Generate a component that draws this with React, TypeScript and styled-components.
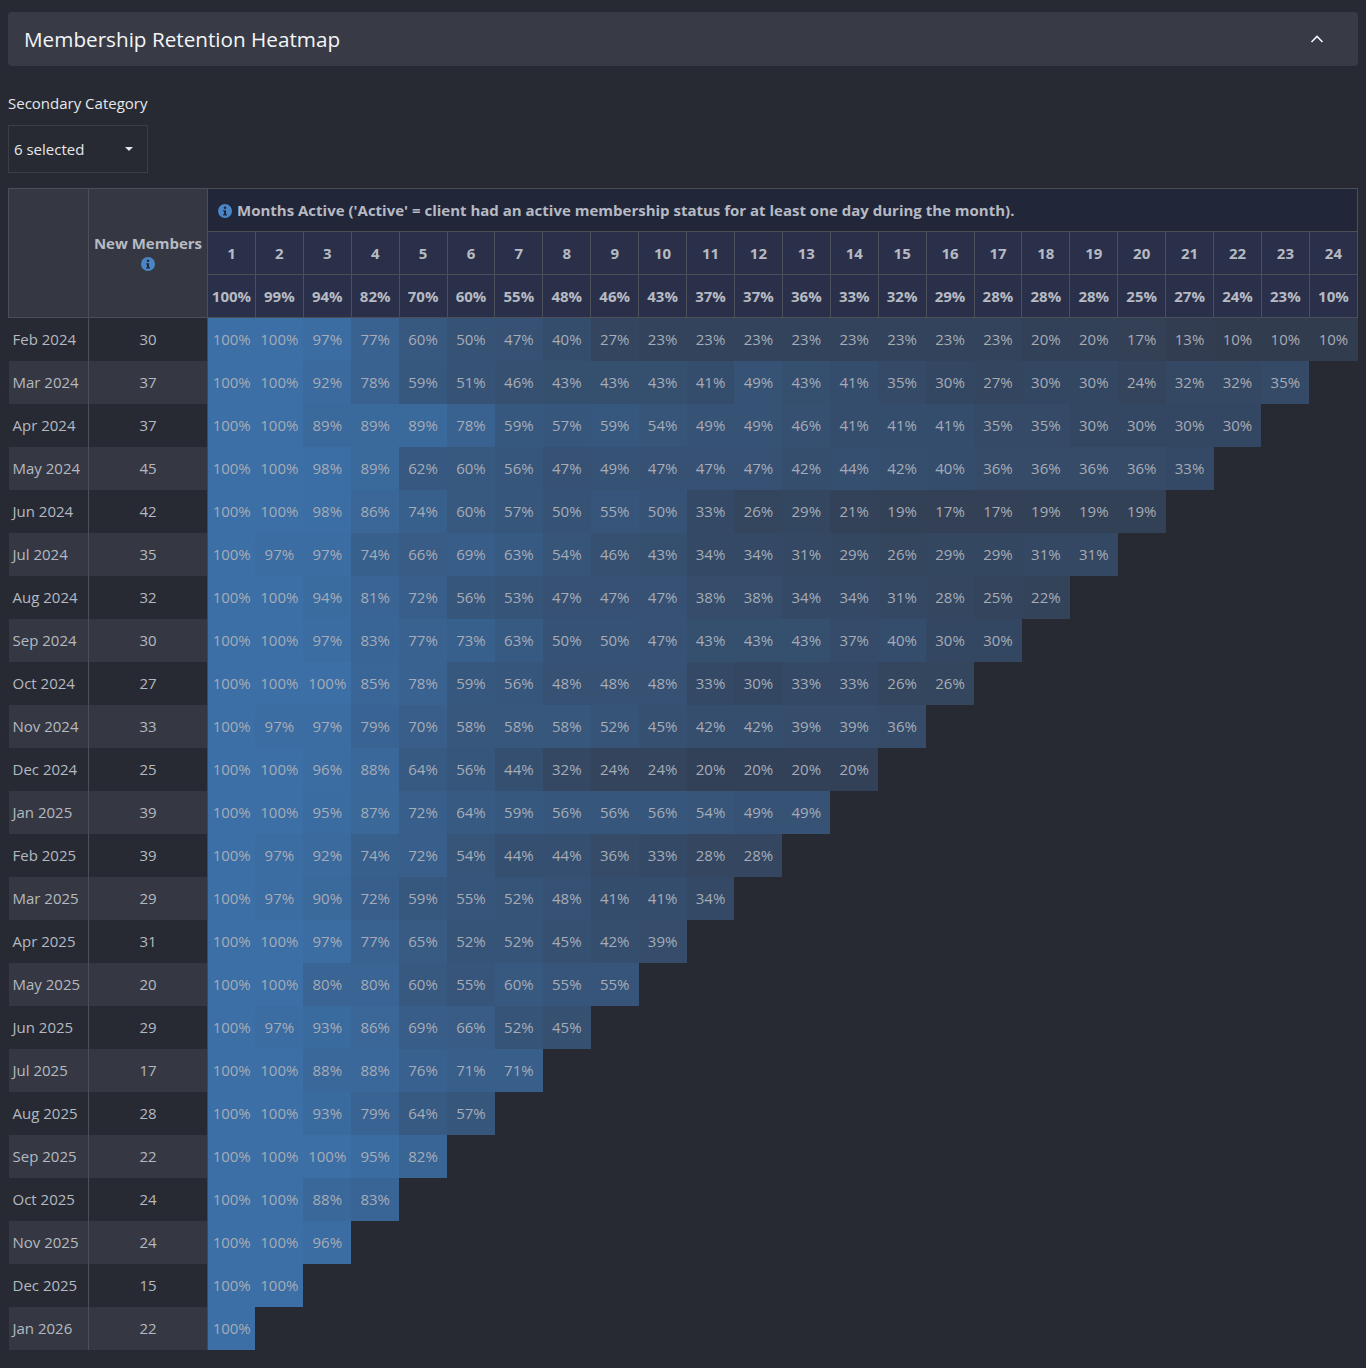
import React, { useState } from "react";
import styled, { createGlobalStyle } from "styled-components";

const GlobalStyle = createGlobalStyle`
  html, body {
    margin: 0;
    padding: 0;
    background: #272a32;
  }
  body {
    padding: 12px 8px 18px;
    font-family: "Open Sans", "Noto Sans", "Liberation Sans", sans-serif;
    color: #dfe1e6;
  }
`;

const overall = [100, 99, 94, 82, 70, 60, 55, 48, 46, 43, 37, 37, 36, 33, 32, 29, 28, 28, 28, 25, 27, 24, 23, 10];

const cohorts: { month: string; members: number; values: number[] }[] = [
  { month: "Feb 2024", members: 30, values: [100, 100, 97, 77, 60, 50, 47, 40, 27, 23, 23, 23, 23, 23, 23, 23, 23, 20, 20, 17, 13, 10, 10, 10] },
  { month: "Mar 2024", members: 37, values: [100, 100, 92, 78, 59, 51, 46, 43, 43, 43, 41, 49, 43, 41, 35, 30, 27, 30, 30, 24, 32, 32, 35] },
  { month: "Apr 2024", members: 37, values: [100, 100, 89, 89, 89, 78, 59, 57, 59, 54, 49, 49, 46, 41, 41, 41, 35, 35, 30, 30, 30, 30] },
  { month: "May 2024", members: 45, values: [100, 100, 98, 89, 62, 60, 56, 47, 49, 47, 47, 47, 42, 44, 42, 40, 36, 36, 36, 36, 33] },
  { month: "Jun 2024", members: 42, values: [100, 100, 98, 86, 74, 60, 57, 50, 55, 50, 33, 26, 29, 21, 19, 17, 17, 19, 19, 19] },
  { month: "Jul 2024", members: 35, values: [100, 97, 97, 74, 66, 69, 63, 54, 46, 43, 34, 34, 31, 29, 26, 29, 29, 31, 31] },
  { month: "Aug 2024", members: 32, values: [100, 100, 94, 81, 72, 56, 53, 47, 47, 47, 38, 38, 34, 34, 31, 28, 25, 22] },
  { month: "Sep 2024", members: 30, values: [100, 100, 97, 83, 77, 73, 63, 50, 50, 47, 43, 43, 43, 37, 40, 30, 30] },
  { month: "Oct 2024", members: 27, values: [100, 100, 100, 85, 78, 59, 56, 48, 48, 48, 33, 30, 33, 33, 26, 26] },
  { month: "Nov 2024", members: 33, values: [100, 97, 97, 79, 70, 58, 58, 58, 52, 45, 42, 42, 39, 39, 36] },
  { month: "Dec 2024", members: 25, values: [100, 100, 96, 88, 64, 56, 44, 32, 24, 24, 20, 20, 20, 20] },
  { month: "Jan 2025", members: 39, values: [100, 100, 95, 87, 72, 64, 59, 56, 56, 56, 54, 49, 49] },
  { month: "Feb 2025", members: 39, values: [100, 97, 92, 74, 72, 54, 44, 44, 36, 33, 28, 28] },
  { month: "Mar 2025", members: 29, values: [100, 97, 90, 72, 59, 55, 52, 48, 41, 41, 34] },
  { month: "Apr 2025", members: 31, values: [100, 100, 97, 77, 65, 52, 52, 45, 42, 39] },
  { month: "May 2025", members: 20, values: [100, 100, 80, 80, 60, 55, 60, 55, 55] },
  { month: "Jun 2025", members: 29, values: [100, 97, 93, 86, 69, 66, 52, 45] },
  { month: "Jul 2025", members: 17, values: [100, 100, 88, 88, 76, 71, 71] },
  { month: "Aug 2025", members: 28, values: [100, 100, 93, 79, 64, 57] },
  { month: "Sep 2025", members: 22, values: [100, 100, 100, 95, 82] },
  { month: "Oct 2025", members: 24, values: [100, 100, 88, 83] },
  { month: "Nov 2025", members: 24, values: [100, 100, 96] },
  { month: "Dec 2025", members: 15, values: [100, 100] },
  { month: "Jan 2026", members: 22, values: [100] },
];

// low -> high of the heat ramp
const LOW = [49, 54, 69];
const HIGH = [59, 111, 166];

const heatColor = (pct: number) => {
  const t = Math.max(0, Math.min(1, pct / 100));
  const c = LOW.map((l, i) => Math.round(l + (HIGH[i] - l) * t));
  return `rgb(${c[0]}, ${c[1]}, ${c[2]})`;
};

const InfoIcon = ({ size = 14 }: { size?: number }) => (
  <svg width={size} height={size} viewBox="0 0 16 16" style={{ verticalAlign: "-2px" }}>
    <circle cx="8" cy="8" r="8" fill="#4a86c6" />
    <circle cx="8" cy="4.3" r="1.5" fill="#23273a" />
    <path d="M5.8 7h3.4v4.6h1.1v1.6H5.8v-1.6h1.1V8.6H5.8z" fill="#23273a" />
  </svg>
);

const Panel = styled.div`
  display: flex;
  align-items: center;
  justify-content: space-between;
  height: 54px;
  padding: 0 32px 0 16px;
  background: #383b45;
  border-radius: 4px;
`;

const Title = styled.h2`
  margin: 0;
  font-size: 20.7px;
  font-weight: 500;
  color: #f4f5f7;
`;

const CollapseButton = styled.button`
  display: flex;
  align-items: center;
  justify-content: center;
  width: 18px;
  height: 18px;
  padding: 0;
  border: none;
  background: transparent;
  cursor: pointer;
`;

const FilterLabel = styled.div`
  margin-top: 26px;
  font-size: 15px;
  line-height: 22px;
  color: #e6e7ea;
`;

const Select = styled.button`
  display: flex;
  align-items: center;
  justify-content: space-between;
  width: 140px;
  height: 48px;
  margin-top: 11px;
  padding: 0 14px 0 5px;
  background: transparent;
  border: 1px solid #3b3e47;
  color: #e6e7ea;
  font-family: inherit;
  font-size: 15px;
  cursor: pointer;
`;

const Caret = styled.span`
  width: 0;
  height: 0;
  border-left: 4px solid transparent;
  border-right: 4px solid transparent;
  border-top: 4px solid #e6e7ea;
`;

const Table = styled.table`
  width: 100%;
  margin-top: 15px;
  border-collapse: collapse;
  table-layout: fixed;
  font-size: 15px;
`;

const CornerHead = styled.th`
  padding: 0;
  background: #353842;
  border: 1px solid #4c4f58;
  color: #b6bac3;
  font-weight: 700;
  font-size: 15px;
  line-height: 20px;
  vertical-align: middle;
  white-space: nowrap;
`;

const InfoHead = styled.th`
  height: 42px;
  padding: 0 10px;
  background: #222639;
  border: 1px solid #4c4f58;
  color: #b6bac3;
  font-weight: 700;
  text-align: left;
  white-space: nowrap;
`;

const InfoText = styled.span`
  margin-left: 5px;
`;

const MonthHead = styled.th`
  height: 42px;
  padding: 0;
  background: #2a3049;
  border: 1px solid #4c4f58;
  color: #b6bac3;
  font-weight: 700;
  text-align: center;
  white-space: nowrap;
`;

const Row = styled.tr<{ $striped: boolean }>`
  height: 43px;
  & > td:nth-child(-n + 2) {
    background: ${(p) => (p.$striped ? "#353842" : "transparent")};
  }
`;

const DateCell = styled.td`
  padding: 0 0 0 4px;
  border-right: 1px solid #4c4f58;
  color: #b4b8c1;
  white-space: nowrap;
`;

const CountCell = styled.td`
  padding: 0;
  text-align: center;
  color: #b4b8c1;
  border-right: 1px solid #2f4e72;
`;

const HeatCell = styled.td`
  padding: 0;
  text-align: center;
  color: #a6acb7;
  white-space: nowrap;
  overflow: visible;
`;

const EmptyCell = styled.td`
  padding: 0;
`;

export default function App() {
  const [open, setOpen] = useState(true);

  return (
    <>
      <GlobalStyle />
      <Panel>
        <Title>Membership Retention Heatmap</Title>
        <CollapseButton onClick={() => setOpen(!open)} aria-label="Collapse">
          <svg width="14" height="8" viewBox="0 0 14 8">
            <path d="M1.5 7 L7 1.5 L12.5 7" stroke="#f4f5f7" strokeWidth="1.6" fill="none" />
          </svg>
        </CollapseButton>
      </Panel>

      {open && (
        <>
          <FilterLabel>Secondary Category</FilterLabel>
          <Select>
            <span>6 selected</span>
            <Caret />
          </Select>

          <Table>
            <colgroup>
              <col style={{ width: 80 }} />
              <col style={{ width: 119 }} />
              {overall.map((_, i) => (
                <col key={i} />
              ))}
            </colgroup>
            <thead>
              <tr>
                <CornerHead rowSpan={3} />
                <CornerHead rowSpan={3}>
                  New Members
                  <br />
                  <InfoIcon />
                </CornerHead>
                <InfoHead colSpan={24}>
                  <InfoIcon />
                  <InfoText>
                    Months Active ('Active' = client had an active membership status for at least one day during the month).
                  </InfoText>
                </InfoHead>
              </tr>
              <tr>
                {overall.map((_, i) => (
                  <MonthHead key={i}>{i + 1}</MonthHead>
                ))}
              </tr>
              <tr>
                {overall.map((v, i) => (
                  <MonthHead key={i}>{v}%</MonthHead>
                ))}
              </tr>
            </thead>
            <tbody>
              {cohorts.map((c, r) => (
                <Row key={c.month} $striped={r % 2 === 1}>
                  <DateCell>{c.month}</DateCell>
                  <CountCell>{c.members}</CountCell>
                  {overall.map((_, i) =>
                    i < c.values.length ? (
                      <HeatCell key={i} style={{ background: heatColor(c.values[i]) }}>
                        {c.values[i]}%
                      </HeatCell>
                    ) : (
                      <EmptyCell key={i} />
                    )
                  )}
                </Row>
              ))}
            </tbody>
          </Table>
        </>
      )}
    </>
  );
}
